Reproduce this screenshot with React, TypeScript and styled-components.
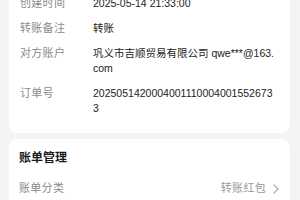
import styled, { createGlobalStyle } from "styled-components"

const GlobalStyle = createGlobalStyle`
  html, body {
    margin: 0;
    padding: 0;
    background: #f4f4f4;
    font-family: "Liberation Sans", "Noto Sans CJK SC", sans-serif;
  }
`

const details = [
  { label: "创建时间", value: "2025-05-14 21:33:00" },
  { label: "转账备注", value: "转账" },
  { label: "对方账户", value: "巩义市吉顺贸易有限公司 qwe***@163.com" },
  { label: "订单号", value: "20250514200040011100040015526733" },
]

const ChevronRight = () => (
  <svg width="8" height="10" viewBox="0 0 8 10" fill="none">
    <path d="M2 1l4 4-4 4" stroke="#aaa" strokeWidth="1.1" strokeLinecap="round" strokeLinejoin="round" />
  </svg>
)

export default function App() {
  return (
    <Page>
      <GlobalStyle />
      <Card $top={-16}>
        <DetailList>
          {details.map((x) => (
            <DetailRow key={x.label}>
              <Label>{x.label}</Label>
              <Value>{x.value}</Value>
            </DetailRow>
          ))}
        </DetailList>
      </Card>

      <Card>
        <SectionTitle>账单管理</SectionTitle>
        <ManageRow>
          <Label>账单分类</Label>
          <ManageValue>
            <span>转账红包</span>
            <ChevronRight />
          </ManageValue>
        </ManageRow>
      </Card>
    </Page>
  )
}

const Page = styled.div`
  width: 300px;
  height: 200px;
  overflow: hidden;
  display: flex;
  flex-direction: column;
  gap: 6px;
  padding: 0 10px 0 9px;
  box-sizing: border-box;
`
const Card = styled.div<{ $top?: number }>`
  background: #fff;
  border-radius: 8px;
  padding: 12px 8px 17px 11px;
  margin-top: ${(p) => p.$top ?? 0}px;
  flex-shrink: 0;
`
const DetailList = styled.div`
  display: flex;
  flex-direction: column;
  gap: 10px;
`
const DetailRow = styled.div`
  display: flex;
  font-size: 10.5px;
  line-height: 15px;
`
const Label = styled.div`
  width: 73px;
  flex-shrink: 0;
  color: #8a8a8a;
  letter-spacing: 0.3px;
  font-size: 11px;
`
const Value = styled.div`
  flex: 1;
  max-width: 184px;
  color: #222;
  word-break: break-all;
`
const SectionTitle = styled.div`
  font-size: 12px;
  line-height: 15px;
  font-weight: bold;
  color: #1a1a1a;
  margin-left: -1px;
`
const ManageRow = styled.div`
  display: flex;
  justify-content: space-between;
  align-items: center;
  margin-top: 15px;
  line-height: 15px;
  margin-left: -1px;
  padding-right: 2px;
`
const ManageValue = styled.div`
  display: flex;
  align-items: center;
  gap: 6px;
  font-size: 11px;
  color: #999;
  letter-spacing: 0.3px;
`
